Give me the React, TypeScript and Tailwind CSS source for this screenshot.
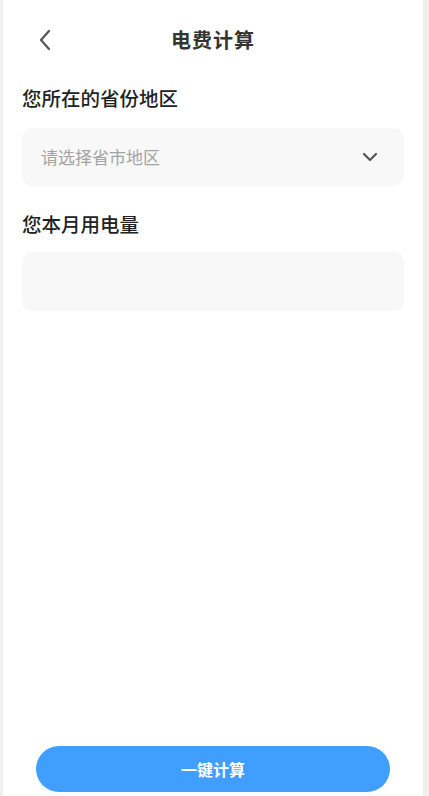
export default function App() {
  const font = { fontFamily: '"Noto Sans CJK SC", "Noto Sans", sans-serif' };
  return (
    <div className="flex h-[796px] w-full bg-[#efefef]" style={font}>
      <div className="ml-[3px] mr-[6px] flex flex-1 flex-col bg-white">
        {/* Header */}
        <div className="relative flex h-[80px] items-center justify-center">
          <button className="absolute left-[30px] top-[26px] flex h-[28px] w-[24px] items-center justify-center">
            <svg width="14" height="22" viewBox="0 0 14 22" fill="none">
              <polyline points="11,2 3,11 11,20" stroke="#555" strokeWidth="2.2" strokeLinecap="round" strokeLinejoin="round" />
            </svg>
          </button>
          <h1 className="text-[20px] font-bold tracking-[1px] text-[#333]">电费计算</h1>
        </div>

        <div className="flex flex-col px-[19px]">
          <p className="pt-[4px] text-[19.5px] leading-[28px] font-medium text-[#222]">您所在的省份地区</p>
          <div className="mt-[16px] flex h-[58px] items-center justify-between rounded-[10px] bg-[#f8f8f8] pl-[19px] pr-[26px]">
            <span className="text-[17px] text-[#a3a3a3]">请选择省市地区</span>
            <svg width="16" height="10" viewBox="0 0 16 10" fill="none">
              <polyline points="2,2 8,8 14,2" stroke="#555" strokeWidth="2.2" strokeLinecap="round" strokeLinejoin="round" />
            </svg>
          </div>

          <p className="mt-[24px] text-[19.5px] leading-[28px] font-medium text-[#222]">您本月用电量</p>
          <div className="mt-[14px] h-[59px] rounded-[10px] bg-[#f8f8f8]" />
        </div>

        <button className="mx-[33px] mb-[4px] mt-auto flex h-[46px] items-center justify-center rounded-full bg-[#409eff] text-[16px] font-bold text-white">
          一键计算
        </button>
      </div>
    </div>
  );
}
